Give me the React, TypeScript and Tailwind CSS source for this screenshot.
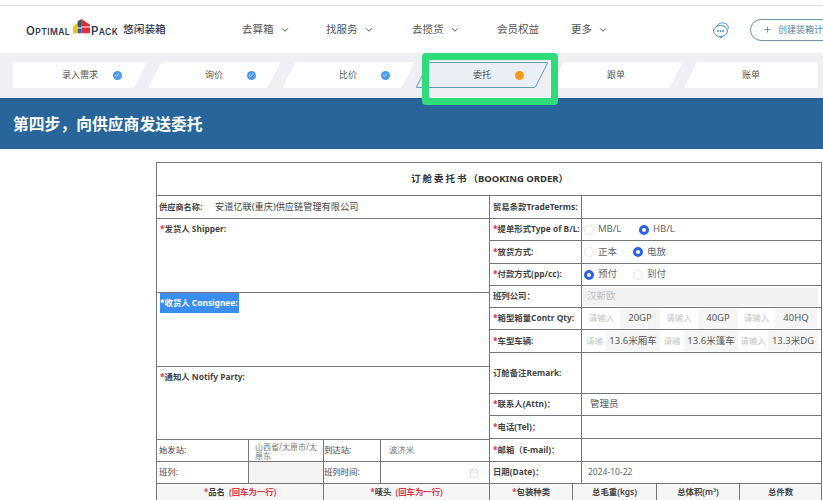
import React from "react";
import { ChevronDown, Plus, Calendar } from "lucide-react";

const CJK = { fontFamily: '"Noto Sans","Noto Sans CJK SC",sans-serif' };

function Nav({ t, w, chev = true }: { t: string; w: string; chev?: boolean }) {
  return (
    <div className={`shrink-0 flex items-center gap-[6px] ${w}`}>
      <span className="text-[10.5px] text-[#555]">{t}</span>
      {chev && <ChevronDown size={10} strokeWidth={2.2} className="text-[#444]" />}
    </div>
  );
}

function Logo() {
  return (
    <div className="shrink-0 flex items-center w-[242px] pl-[26px]">
      <span className="w-[46px] text-[#2f3a55] font-semibold leading-none tracking-[0.4px] whitespace-nowrap" style={{ fontFamily: "Inter, sans-serif" }}>
        <span className="text-[11.5px]">O</span>
        <span className="text-[8.5px]">PTIMAL</span>
      </span>
      <svg width="19" height="19" viewBox="0 0 20 20" className="shrink-0 -mt-[4px]">
        <path d="M1 9 L6 5 V16 H1 Z" fill="#f2c21a" />
        <path d="M6 5 L10 2 V16 H6 Z" fill="#2d5fb8" />
        <path d="M6 3.5 L10 1 V8 H6 Z" fill="#2f5d50" />
        <path d="M10 1 L19 7 V16 H10 Z" fill="#d9303a" />
        <path d="M10 9 H19 V10 H10 Z M5.5 10 H10 V11 H5.5 Z" fill="#fff" />
      </svg>
      <span className="w-[28px] text-[#2f3a55] font-semibold leading-none tracking-[0.4px] whitespace-nowrap" style={{ fontFamily: "Inter, sans-serif" }}>
        <span className="text-[11.5px]">P</span>
        <span className="text-[8.5px]">ACK</span>
      </span>
      <span className="ml-[4px] text-[10.7px] font-medium text-[#2f3a55] whitespace-nowrap">悠闲装箱</span>
    </div>
  );
}

function Dot({ color }: { color: string }) {
  return (
    <span className={`absolute left-1/2 top-1/2 -mt-[4px] ml-[33px] w-[8.5px] h-[8.5px] rounded-full ${color}`} />
  );
}

function Check() {
  return (
    <span className="absolute left-1/2 top-1/2 -mt-[4px] ml-[33px] w-[8.5px] h-[8.5px] rounded-full bg-[#4a9af0] flex items-center justify-center">
      <svg width="6" height="6" viewBox="0 0 6 6">
        <path d="M1 3 L2.5 4.4 L5 1.6" fill="none" stroke="#cfe4fb" strokeWidth="1" />
      </svg>
    </span>
  );
}

function Steps() {
  return (
    <div className="h-[45px] bg-[#eef0f3] flex pl-[13px] pr-[5px] pt-[9px]">
      <div className="flex-1 h-[26px] relative bg-white flex items-center justify-center [clip-path:polygon(0_0,100%_0,calc(100%-13px)_100%,0_100%)]">
        <span className="text-[9px] text-[#555]">录入需求</span>
        <Check />
      </div>
      <div className="flex-1 h-[26px] relative flex items-center justify-center">
        <div className="w-[119px] h-[26px] ml-[1px] -skew-x-[27deg] bg-white rounded-[2px]" />
        <span className="absolute text-[9px] text-[#555]">询价</span>
        <Check />
      </div>
      <div className="flex-1 h-[26px] relative flex items-center justify-center">
        <div className="w-[119px] h-[26px] -skew-x-[27deg] bg-white rounded-[2px]" />
        <span className="absolute text-[9px] text-[#555]">比价</span>
        <Check />
      </div>
      <div className="flex-1 h-[26px] relative flex items-center justify-center">
        <div className="w-[120px] h-[26px] -skew-x-[27deg] bg-[#e9eff5] border border-[#5f9db8] rounded-[2px]" />
        <span className="absolute text-[9px] text-[#555]">委托</span>
        <Dot color="bg-[#f59a1b]" />
      </div>
      <div className="flex-1 h-[26px] relative flex items-center justify-center">
        <div className="w-[119px] h-[26px] -skew-x-[27deg] bg-white rounded-[2px]" />
        <span className="absolute text-[9px] text-[#555]">跟单</span>
      </div>
      <div className="flex-1 h-[26px] relative ml-[1px] bg-white flex items-center justify-center [clip-path:polygon(13px_0,100%_0,100%_100%,0_100%)]">
        <span className="text-[9px] text-[#555]">账单</span>
      </div>
    </div>
  );
}

function Req() {
  return <span className="text-[#e0334c]">*</span>;
}

function Label({ children, req }: { children: React.ReactNode; req?: boolean }) {
  return (
    <div className="w-[92px] shrink-0 h-full flex items-center pl-[3px] border-r border-[#777] text-[8.4px] font-bold text-[#444] whitespace-nowrap overflow-hidden">
      {req && <Req />}
      {children}
    </div>
  );
}

function Radio({ on, label, w }: { on?: boolean; label: string; w: string }) {
  return (
    <div className={`flex items-center gap-[4px] ${w}`}>
      <span
        className={
          on
            ? "w-[10px] h-[10px] rounded-full border-[3px] border-[#2d62e6] bg-white shrink-0"
            : "w-[10px] h-[10px] rounded-full border border-[#e6e6e6] bg-white shrink-0"
        }
      />
      <span className="text-[9.5px] text-[#666]">{label}</span>
    </div>
  );
}

function Pair({ ph, phw, val, vw }: { ph: string; phw: string; val: string; vw: string }) {
  return (
    <>
      <div className={`${phw} shrink-0 h-full flex items-center justify-center overflow-hidden text-[8.5px] text-[#c4c4c4] whitespace-nowrap`}>{ph}</div>
      <div className={`${vw} shrink-0 h-[20px] flex items-center justify-center bg-[#f5f5f5] text-[9.5px] text-[#555] whitespace-nowrap`}>{val}</div>
    </>
  );
}

function RightRow({ h, children }: { h: string; children: React.ReactNode }) {
  return <div className={`flex items-center border-b border-[#777] ${h}`}>{children}</div>;
}

function Form() {
  return (
    <div className="ml-[156px] mt-[13px] w-[666px] border-t border-l border-r border-[#777] text-[#444]">
      <div className="h-[33px] border-b border-[#777] flex items-center justify-center pl-[1px] text-[9.5px] font-bold text-[#333] whitespace-nowrap">
        <span className="tracking-[2px]">订舱委托书</span>
        <span className="text-[9.5px]">（BOOKING ORDER）</span>
      </div>
      <div className="flex">
        <div className="w-[333px] shrink-0 border-r border-[#777]">
          <div className="h-[23px] border-b border-[#777] flex items-center pl-[2px] whitespace-nowrap">
            <span className="w-[56px] text-[8.2px] font-semibold">供应商名称:</span>
            <span className="text-[9.2px] text-[#444]">安道亿联(重庆)供应链管理有限公司</span>
          </div>
          <div className="h-[74px] border-b border-[#777] pl-[3px] pt-[3px] text-[8.4px] font-bold leading-[14px]">
            <Req />发货人 Shipper:
          </div>
          <div className="h-[74px] border-b border-[#777] pl-[3px]">
            <div className="w-[79px] h-[20px] bg-[#3a8ef0] text-white text-[8.4px] font-bold leading-[19px] whitespace-nowrap">
              *收货人 Consignee:
            </div>
          </div>
          <div className="h-[73px] border-b border-[#777] pl-[3px] pt-[3px] text-[8.4px] font-bold leading-[14px]">
            <Req />通知人 Notify Party:
          </div>
          <div className="h-[22px] border-b border-[#777] flex items-stretch text-[8.4px]">
            <div className="w-[92px] flex items-center pl-[2px] border-r border-[#777]">始发站:</div>
            <div className="w-[75px] flex items-center pl-[6px] pr-[2px] border-r border-[#777] text-[8px] leading-[9px] text-[#777]">山西省/太原市/太原东</div>
            <div className="w-[57px] flex items-center border-r border-[#777]">到达站:</div>
            <div className="flex-1 flex items-center pl-[8px] text-[#777]">波济米</div>
          </div>
          <div className="h-[22px] border-b border-[#777] flex items-stretch text-[8.4px]">
            <div className="w-[92px] flex items-center pl-[2px] border-r border-[#777]">班列:</div>
            <div className="w-[75px] border-r border-[#777] bg-[#f3f3f3]" />
            <div className="w-[57px] flex items-center border-r border-[#777]">班列时间:</div>
            <div className="flex-1 flex items-center justify-end pr-[10px]">
              <Calendar size={10} strokeWidth={1} className="text-[#bbb]" />
            </div>
          </div>
        </div>
        <div className="flex-1 min-w-0">
          <RightRow h="h-[23px]"><Label>贸易条款TradeTerms:</Label></RightRow>
          <RightRow h="h-[22px]">
            <Label req>提单形式Type of B/L:</Label>
            <div className="flex items-center pl-[2px]">
              <Radio label="MB/L" w="w-[55px]" />
              <Radio on label="HB/L" w="w-[60px]" />
            </div>
          </RightRow>
          <RightRow h="h-[23px]">
            <Label req>放货方式:</Label>
            <div className="flex items-center pl-[2px]">
              <Radio label="正本" w="w-[49px]" />
              <Radio on label="电放" w="w-[60px]" />
            </div>
          </RightRow>
          <RightRow h="h-[22px]">
            <Label req>付款方式(pp/cc):</Label>
            <div className="flex items-center pl-[2px]">
              <Radio on label="预付" w="w-[49px]" />
              <Radio label="到付" w="w-[60px]" />
            </div>
          </RightRow>
          <RightRow h="h-[22px]">
            <Label>班列公司：</Label>
            <div className="flex-1 px-[1px]">
              <div className="h-[18px] mr-[2px] bg-[#f2f2f2] text-[9.5px] text-[#bdbdbd] flex items-center pl-[4px]">汉新欧</div>
            </div>
          </RightRow>
          <RightRow h="h-[22px]">
            <Label req>箱型箱量Contr Qty:</Label>
            <div className="flex-1 flex items-center h-full pl-[1px]">
              <Pair ph="请输入" phw="w-[37px]" val="20GP" vw="w-[40px]" />
              <Pair ph="请输入" phw="w-[38px]" val="40GP" vw="w-[40px]" />
              <Pair ph="请输入" phw="w-[37px]" val="40HQ" vw="w-[42px]" />
            </div>
          </RightRow>
          <RightRow h="h-[23px]">
            <Label req>车型车辆:</Label>
            <div className="flex-1 flex items-center h-full pl-[1px]">
              <Pair ph="请输" phw="w-[23px]" val="13.6米厢车" vw="w-[54px]" />
              <Pair ph="请输" phw="w-[24px]" val="13.6米篷车" vw="w-[54px]" />
              <Pair ph="请输入" phw="w-[30px]" val="13.3米DG" vw="w-[50px]" />
            </div>
          </RightRow>
          <RightRow h="h-[41px]"><Label>订舱备注Remark:</Label></RightRow>
          <RightRow h="h-[22px]">
            <Label req>联系人(Attn)：</Label>
            <span className="pl-[8px] text-[9.5px] text-[#555]">管理员</span>
          </RightRow>
          <RightRow h="h-[23px]"><Label req>电话(Tel)：</Label></RightRow>
          <RightRow h="h-[23px]"><Label req>邮箱（E-mail)：</Label></RightRow>
          <RightRow h="h-[22px]">
            <Label>日期(Date)：</Label>
            <span className="pl-[6px] text-[8.5px] text-[#666]">2024-10-22</span>
          </RightRow>
        </div>
      </div>
      <div className="flex h-[24px] bg-[#f6f6f6] text-[8.4px] font-semibold pb-[8px]">
        <div className="w-[167px] flex items-center justify-center border-r border-[#777] whitespace-nowrap">
          <Req />品名<span className="ml-[4px] text-[#e0334c]">(回车为一行)</span>
        </div>
        <div className="w-[166px] flex items-center justify-center border-r border-[#777] whitespace-nowrap">
          <Req />唛头<span className="ml-[4px] text-[#e0334c]">(回车为一行)</span>
        </div>
        <div className="w-[83px] flex items-center justify-center border-r border-[#777]"><Req />包装种类</div>
        <div className="w-[84px] flex items-center justify-center border-r border-[#777]">总毛重(kgs)</div>
        <div className="w-[83px] flex items-center justify-center border-r border-[#777]">总体积(m³)</div>
        <div className="flex-1 flex items-center justify-center">总件数</div>
      </div>
    </div>
  );
}

export default function App() {
  return (
    <div className="relative w-[823px] h-[500px] overflow-hidden bg-white" style={CJK}>
      <div className="h-[6px] border-b border-[#e2e2e2]" />
      <div className="h-[47px] flex items-center">
        <Logo />
        <Nav t="去算箱" w="w-[84px]" />
        <Nav t="找服务" w="w-[86px]" />
        <Nav t="去揽货" w="w-[85px]" />
        <Nav t="会员权益" w="w-[74px]" chev={false} />
        <Nav t="更多" w="w-[141px]" />
        <svg width="18" height="18" viewBox="0 0 18 18" className="shrink-0 text-[#4b93c9]" fill="none" stroke="currentColor" strokeWidth="1">
          <path d="M5 5 C6 2.5 9 1.5 12 2 C15 2.5 17 5 16 8" />
          <ellipse cx="8.5" cy="10" rx="7" ry="5.5" />
          <path d="M7 15.2 L9 17 L10.5 15.2" />
          <circle cx="6" cy="10" r="0.6" fill="currentColor" />
          <circle cx="8.5" cy="10" r="0.6" fill="currentColor" />
          <circle cx="11" cy="10" r="0.6" fill="currentColor" />
        </svg>
        <div className="ml-[20px] shrink-0 w-[120px] h-[22px] rounded-full border border-[#6e93ad] flex items-center pl-[12px] gap-[6px] text-[9px] text-[#5b7f99] whitespace-nowrap">
          <Plus size={9} strokeWidth={2} />
          <span>创建装箱计划</span>
        </div>
      </div>
      <Steps />
      <div className="h-[51px] bg-[#27659a] border-t border-[#1f5a8c] flex items-center pl-[13px] pt-[1px]">
        <span className="text-[15.8px] font-bold text-white leading-none">第四步，向供应商发送委托</span>
      </div>
      <Form />
      <div className="absolute left-[422px] top-[53px] w-[136px] h-[52px] border-[7px] border-[#2edc7c] rounded-[4px]" />
    </div>
  );
}
